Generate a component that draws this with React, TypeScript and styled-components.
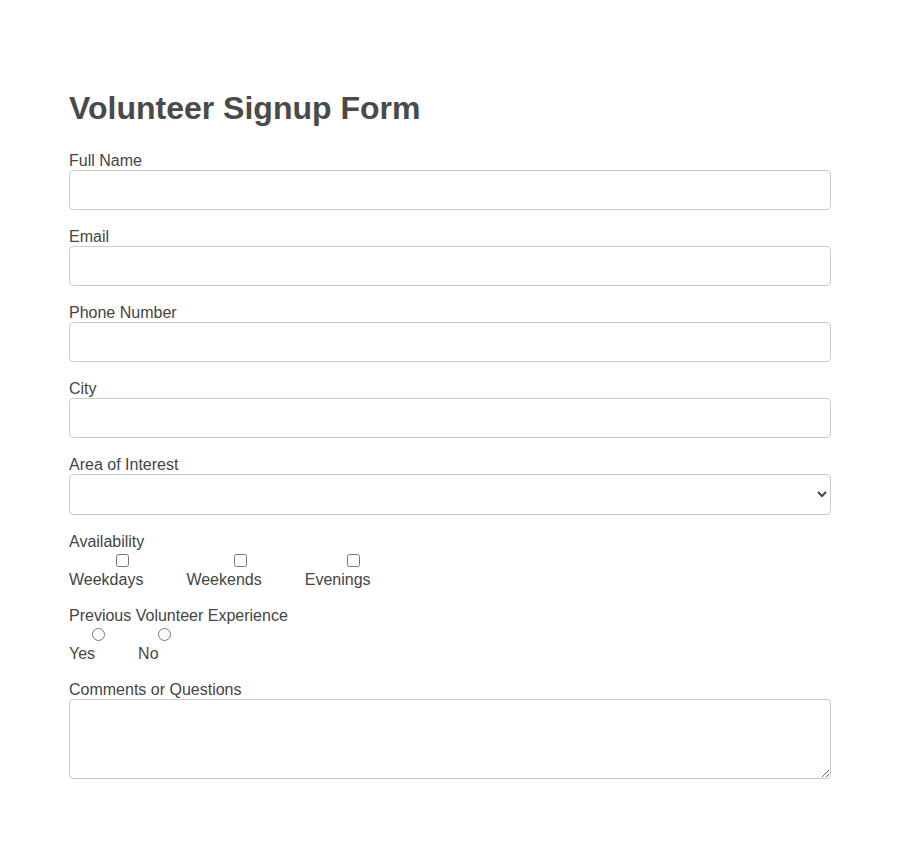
import React from "react";
import styled, { createGlobalStyle } from "styled-components";

const Global = createGlobalStyle`
  html, body { margin: 0; padding: 0; background: #fff; }
  body { font-family: "Liberation Sans", Arial, sans-serif; font-size: 16px; color: #444; }
  * { box-sizing: border-box; }
`;

const Page = styled.div`
  width: 762px;
  margin: 0 auto;
  padding-top: 71px;
  padding-bottom: 60px;
`;

const Title = styled.h1`
  font-size: 32px;
  line-height: 37px;
  font-weight: bold;
  color: #4a4a4a;
  margin: 19px 0 25px;
`;

const Form = styled.form`
  display: flex;
  flex-direction: column;
  gap: 18px;
`;

const Group = styled.div`
  display: flex;
  flex-direction: column;
`;

const Label = styled.label`
  display: block;
  line-height: 18px;
  color: #444;
  margin-bottom: 0;
`;

const controlCss = `
  width: 100%;
  padding: 10px;
  border: 1px solid #ccc;
  border-radius: 4px;
  font-family: "Liberation Sans", Arial, sans-serif;
  font-size: 16px;
  line-height: 18px;
  color: #444;
  background: #fff;
`;

const Input = styled.input`
  ${controlCss}
  height: 40px;
`;

const Select = styled.select`
  ${controlCss}
  height: 41px;
`;

const TextArea = styled.textarea`
  ${controlCss}
  height: 80px;
  display: block;
`;

const Options = styled.div`
  display: flex;
  gap: 10px;
`;

const Option = styled.label`
  display: inline-flex;
  flex-direction: column;
  line-height: 18px;
  color: #444;
`;

const Check = styled.input<{ $shift?: number }>`
  align-self: center;
  margin: 3px 1px 4px 0;
  width: 13px;
  height: 13px;
`;

const OptionText = styled.span`
  display: block;
  padding-right: 33px;
`;

export default function App() {
  return (
    <>
      <Global />
      <Page>
        <Title>Volunteer Signup Form</Title>
        <Form onSubmit={(e) => e.preventDefault()}>
          <Group>
            <Label htmlFor="name">Full Name</Label>
            <Input id="name" type="text" />
          </Group>
          <Group>
            <Label htmlFor="email">Email</Label>
            <Input id="email" type="email" />
          </Group>
          <Group>
            <Label htmlFor="phone">Phone Number</Label>
            <Input id="phone" type="tel" />
          </Group>
          <Group>
            <Label htmlFor="city">City</Label>
            <Input id="city" type="text" />
          </Group>
          <Group>
            <Label htmlFor="interest">Area of Interest</Label>
            <Select id="interest" defaultValue="">
              <option value=""></option>
              <option value="education">Education</option>
              <option value="environment">Environment</option>
              <option value="health">Health</option>
            </Select>
          </Group>
          <Group>
            <Label as="span">Availability</Label>
            <Options>
              {["Weekdays", "Weekends", "Evenings"].map((d) => (
                <Option key={d}>
                  <Check type="checkbox" name="availability" value={d} />
                  <OptionText>{d}</OptionText>
                </Option>
              ))}
            </Options>
          </Group>
          <Group>
            <Label as="span">Previous Volunteer Experience</Label>
            <Options>
              {["Yes", "No"].map((d) => (
                <Option key={d}>
                  <Check type="radio" name="experience" value={d} />
                  <OptionText>{d}</OptionText>
                </Option>
              ))}
            </Options>
          </Group>
          <Group>
            <Label htmlFor="comments">Comments or Questions</Label>
            <TextArea id="comments" />
          </Group>
        </Form>
      </Page>
    </>
  );
}
